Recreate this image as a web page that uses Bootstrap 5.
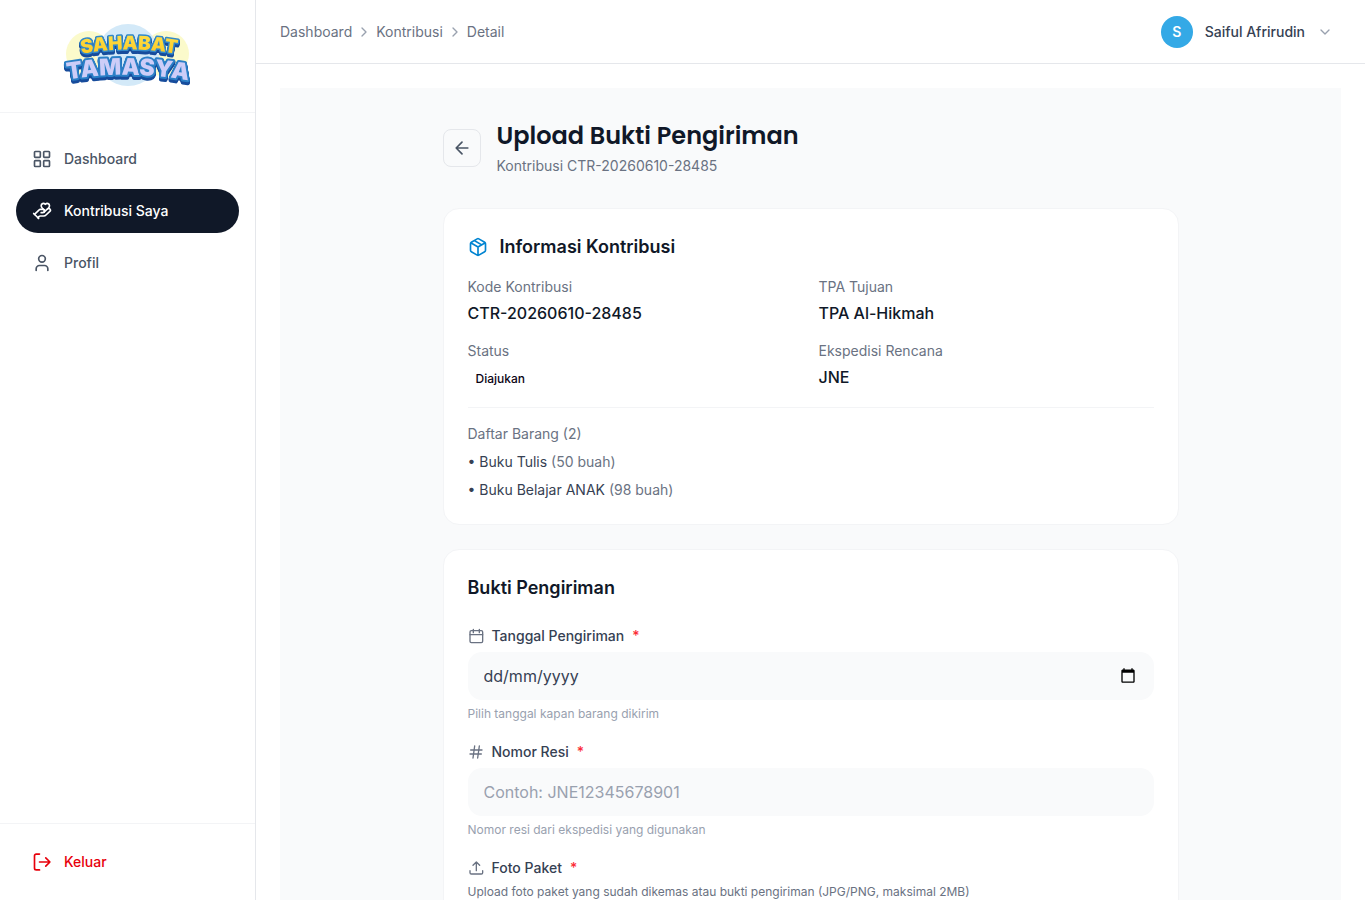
<!DOCTYPE html>
<html lang="id">
<head>
<meta charset="utf-8">
<meta name="viewport" content="width=device-width, initial-scale=1">
<title>Upload Bukti Pengiriman - Sahabat Tamasya</title>
<link href="https://cdn.jsdelivr.net/npm/bootstrap@5.3.0/dist/css/bootstrap.min.css" rel="stylesheet">
<style>
  :root { --ink: #101828; --slate: #364153; --body: #4a5565; --muted: #6a7282; --faint: #99a1af; --line: #e5e7eb; --soft: #f3f4f6; --tint: #f9fafb; }
  body { font-family: Inter, "Liberation Sans", sans-serif; font-size: 14px; line-height: 20px; color: var(--ink); background: #fff; }
  a { text-decoration: none; }
  svg { flex-shrink: 0; }
  .line-icon { fill: none; stroke: currentColor; stroke-width: 2; stroke-linecap: round; stroke-linejoin: round; }
  .side { width: 256px; border-right: 1px solid var(--line); }
  .side-brand { height: 113px; border-bottom: 1px solid var(--soft); }
  .side-foot { border-top: 1px solid var(--soft); }
  .side-link { display: flex; align-items: center; gap: 12px; padding: 12px 16px; border: 0; border-radius: 22px; background: none; color: var(--body); font-weight: 500; width: 100%; }
  .side-link.active { background: var(--ink); color: #fff; }
  .side-link.leave { color: #e7000b; }
  .brand-word { font-family: Inter, sans-serif; font-weight: 900; paint-order: stroke; stroke-linejoin: round; text-anchor: middle; filter: drop-shadow(0 1px 0 #174c9c) drop-shadow(0 1px 0 #174c9c) drop-shadow(0 1px 0 #174c9c); }
  .topbar { height: 64px; border-bottom: 1px solid var(--line); }
  .crumbs { gap: 4px; }
  .crumbs a, .crumbs span { color: var(--muted); }
  .crumbs svg, .user-menu svg { color: var(--faint); }
  .avatar { width: 32px; height: 32px; background: #34a9e6; color: #fff; font-weight: 600; }
  .user-menu { font-size: 14px; line-height: 20px; }
  .user-name { color: var(--slate); font-weight: 500; }
  .scroller { overflow-y: auto; scrollbar-width: none; }
  .scroller::-webkit-scrollbar { display: none; }
  .panel { background: var(--tint); }
  .page-col { max-width: 768px; padding: 32px 16px; }
  .back { width: 38px; height: 38px; border: 1px solid var(--line); border-radius: 8px; color: var(--body); }
  .page-title { font-family: Poppins, Inter, sans-serif; font-size: 24px; line-height: 32px; font-weight: 600; }
  .text-dim { color: var(--muted); }
  .sheet { background: #fff; border: 1px solid var(--soft); border-radius: 16px; padding: 24px; }
  .sheet h2 { font-size: 18px; line-height: 28px; font-weight: 600; }
  .facts dt { font-weight: 400; color: var(--muted); margin-bottom: 4px; }
  .facts dd { font-size: 16px; line-height: 24px; font-weight: 500; margin: 0; }
  .facts .state { display: inline-block; font-size: 12px; line-height: 16px; padding: 6px 8px 4px; color: #0c0414; }
  .goods { border-top: 1px solid var(--soft); color: var(--slate); }
  .field-label { color: var(--slate); font-weight: 500; margin-bottom: 6px; }
  .field-label svg { color: var(--muted); }
  .field-label b { color: #fb2c36; font-weight: 500; }
  .field-box { height: 48px; padding: 12px 16px; border: 0; border-radius: 14px; background: var(--tint); color: var(--slate); font-size: 16px; line-height: 24px; }
  .field-box::placeholder { color: #99a1af; opacity: 1; }
  .date-box::placeholder { color: var(--slate); }
  .pick { right: 16px; color: #000; }
  .hint { font-size: 12px; line-height: 16px; color: var(--faint); margin: 6px 0 0; }
  .hint.text-dim { color: var(--muted); }
</style>
</head>
<body>
<div class="d-flex vh-100">
  <aside class="side d-flex flex-column flex-shrink-0">
    <a href="#" class="side-brand d-flex align-items-center justify-content-center" aria-label="Sahabat Tamasya">
      <svg width="144" height="80" viewBox="0 0 144 80">
        <defs>
          <path id="arcTop" d="M14 40Q73 27 132 40"/>
          <path id="arcLow" d="M4 65Q72 52 140 66"/>
          <linearGradient id="gold" x1="0" y1="0" x2="0" y2="1"><stop offset="0" stop-color="#ffe14b"/><stop offset="1" stop-color="#fbc51e"/></linearGradient>
        </defs>
        <circle cx="33" cy="38" r="23" fill="#fbfacb"/>
        <circle cx="110" cy="38" r="23" fill="#fbfacb"/>
        <circle cx="72" cy="39" r="31" fill="#d3e9f8"/>
        <text class="brand-word" font-size="19" fill="url(#gold)" stroke="#3289ca" stroke-width="3"><textPath href="#arcTop" startOffset="50%">SAHABAT</textPath></text>
        <text class="brand-word" font-size="23" fill="#cdcdf8" stroke="#2b7fc6" stroke-width="4"><textPath href="#arcLow" startOffset="50%">TAMASYA</textPath></text>
      </svg>
    </a>
    <nav class="flex-grow-1 d-flex flex-column gap-2 px-3 py-4">
      <a class="side-link" href="#">
        <svg class="line-icon" width="20" height="20" viewBox="0 0 24 24"><rect x="3" y="3" width="7" height="7" rx="1"/><rect x="14" y="3" width="7" height="7" rx="1"/><rect x="14" y="14" width="7" height="7" rx="1"/><rect x="3" y="14" width="7" height="7" rx="1"/></svg>
        Dashboard</a>
      <a class="side-link active" href="#" aria-current="page">
        <svg class="line-icon" width="20" height="20" viewBox="0 0 24 24"><path d="M11 14h2a2 2 0 0 0 0-4h-3c-.6 0-1.1.2-1.4.6L3 16"/><path d="m14.45 13.39 5.05-4.694C20.196 8 21 6.85 21 5.75a2.75 2.75 0 0 0-4.797-1.837.276.276 0 0 1-.406 0A2.75 2.75 0 0 0 11 5.75c0 1.2.802 2.248 1.5 2.946L16 11.95"/><path d="m2 15 6 6"/><path d="m7 20 1.6-1.4c.3-.4.8-.6 1.4-.6h4c1.1 0 2.1-.4 2.8-1.2l4.6-4.4a1 1 0 0 0-2.75-2.91"/></svg>
        Kontribusi Saya</a>
      <a class="side-link" href="#">
        <svg class="line-icon" width="20" height="20" viewBox="0 0 24 24"><path d="M19 21v-2a4 4 0 0 0-4-4H9a4 4 0 0 0-4 4v2"/><circle cx="12" cy="7" r="4"/></svg>
        Profil</a>
    </nav>
    <div class="side-foot p-3">
      <button class="side-link leave" type="button">
        <svg class="line-icon" width="20" height="20" viewBox="0 0 24 24"><path d="M9 21.500H5a2 2 0 0 1-2-2v-15a2 2 0 0 1 2-2h4M9 12h12.500M16.500 7l5 5-5 5"/></svg>
        Keluar</button>
    </div>
  </aside>

  <div class="d-flex flex-column flex-grow-1 overflow-hidden">
    <header class="topbar d-flex flex-shrink-0 align-items-center justify-content-between px-4">
      <nav class="crumbs d-flex align-items-center" aria-label="breadcrumb">
        <a href="#">Dashboard</a>
        <svg class="line-icon" width="16" height="16" viewBox="0 0 24 24"><path d="m9 18 6-6-6-6"/></svg>
        <a href="#">Kontribusi</a>
        <svg class="line-icon" width="16" height="16" viewBox="0 0 24 24"><path d="m9 18 6-6-6-6"/></svg>
        <span aria-current="page">Detail</span>
      </nav>
      <button type="button" class="user-menu btn border-0 d-flex align-items-center gap-2 p-2">
        <span class="avatar rounded-circle d-flex align-items-center justify-content-center me-1">S</span>
        <span class="user-name me-1">Saiful Afrirudin</span>
        <svg class="line-icon" width="16" height="16" viewBox="0 0 24 24"><path d="m6 9 6 6 6-6"/></svg>
      </button>
    </header>

    <main class="scroller flex-grow-1 p-4">
      <div class="panel">
        <div class="page-col mx-auto">
          <div class="d-flex align-items-center gap-3 mb-4 pb-2">
            <a href="#" class="back d-flex align-items-center justify-content-center" aria-label="Kembali">
              <svg class="line-icon" width="20" height="20" viewBox="0 0 24 24"><path d="m12 19-7-7 7-7M19 12H5"/></svg>
            </a>
            <div>
              <h1 class="page-title mb-1">Upload Bukti Pengiriman</h1>
              <p class="text-dim mb-0">Kontribusi CTR-20260610-28485</p>
            </div>
          </div>

          <section class="sheet mb-4">
            <h2 class="d-flex align-items-center mb-3">
              <svg class="line-icon me-2" width="20" height="20" viewBox="0 0 24 24" color="#0084d1"><path d="M11 21.730a2 2 0 0 0 2 0l7-4A2 2 0 0 0 21 16V8a2 2 0 0 0-1-1.730l-7-4a2 2 0 0 0-2 0l-7 4A2 2 0 0 0 3 8v8a2 2 0 0 0 1 1.730zM12 22V12M3.290 7 12 12l8.710-5M7.500 4.270l9 5.150"/></svg>
              <span class="ms-1">Informasi Kontribusi</span>
            </h2>
            <dl class="facts row gx-3 gy-3 mb-3">
              <div class="col-6"><dt>Kode Kontribusi</dt><dd>CTR-20260610-28485</dd></div>
              <div class="col-6"><dt>TPA Tujuan</dt><dd>TPA Al-Hikmah</dd></div>
              <div class="col-6"><dt>Status</dt><dd class="d-flex"><span class="state">Diajukan</span></dd></div>
              <div class="col-6"><dt>Ekspedisi Rencana</dt><dd>JNE</dd></div>
            </dl>
            <div class="goods pt-3">
              <p class="text-dim mb-2">Daftar Barang (2)</p>
              <ul class="list-unstyled d-flex flex-column gap-2 mb-0">
                <li>• Buku Tulis <span class="text-dim">(50 buah)</span></li>
                <li>• Buku Belajar ANAK <span class="text-dim">(98 buah)</span></li>
              </ul>
            </div>
          </section>

          <form class="sheet">
            <h2 class="mb-4">Bukti Pengiriman</h2>
            <div class="field">
              <label class="field-label d-flex align-items-center gap-2" for="tanggal">
                <svg class="line-icon" width="16" height="16" viewBox="0 0 24 24"><rect x="3" y="4" width="19" height="18" rx="2"/><path d="M8 2v5M17 2v5M3 10h19"/></svg>
                Tanggal Pengiriman <b>*</b></label>
              <div class="position-relative d-flex align-items-center">
                <input class="form-control field-box date-box" id="tanggal" type="text" inputmode="numeric" placeholder="dd/mm/yyyy" required>
                <button class="pick btn border-0 p-0 position-absolute d-flex" type="button" aria-label="Buka kalender">
                  <svg width="20" height="20" viewBox="0 0 24 24" fill="currentColor"><path d="M20 3h-1V1h-2v2H7V1H5v2H4c-1.100 0-2 .900-2 2v16c0 1.100.900 2 2 2h16c1.100 0 2-.900 2-2V5c0-1.100-.900-2-2-2zm0 18H4V8h16v13z" transform="translate(2.400 1.800) scale(.8)"/></svg>
                </button>
              </div>
              <p class="hint">Pilih tanggal kapan barang dikirim</p>
            </div>
            <div class="field mt-3 pt-1">
              <label class="field-label d-flex align-items-center gap-2" for="resi">
                <svg class="line-icon" width="16" height="16" viewBox="0 0 24 24"><path d="M4 9h17M3 15h17M10 3 7.500 21M17 3l-2.500 18"/></svg>
                Nomor Resi <b>*</b></label>
              <input class="form-control field-box" id="resi" type="text" placeholder="Contoh: JNE12345678901" required>
              <p class="hint">Nomor resi dari ekspedisi yang digunakan</p>
            </div>
            <div class="field mt-3 pt-1">
              <label class="field-label d-flex align-items-center gap-2" for="foto">
                <svg class="line-icon" width="16" height="16" viewBox="0 0 24 24"><path d="M12.500 16V3M7.500 8l5-5 5 5M3 16v3a2 2 0 0 0 2 2h15a2 2 0 0 0 2-2v-3"/></svg>
                Foto Paket <b>*</b></label>
              <p class="hint text-dim">Upload foto paket yang sudah dikemas atau bukti pengiriman (JPG/PNG, maksimal 2MB)</p>
              <input class="form-control mt-3" id="foto" type="file" accept="image/png,image/jpeg">
            </div>
          </form>
        </div>
      </div>
    </main>
  </div>
</div>
<script src="https://cdn.jsdelivr.net/npm/bootstrap@5.3.0/dist/js/bootstrap.bundle.min.js"></script>
</body>
</html>
